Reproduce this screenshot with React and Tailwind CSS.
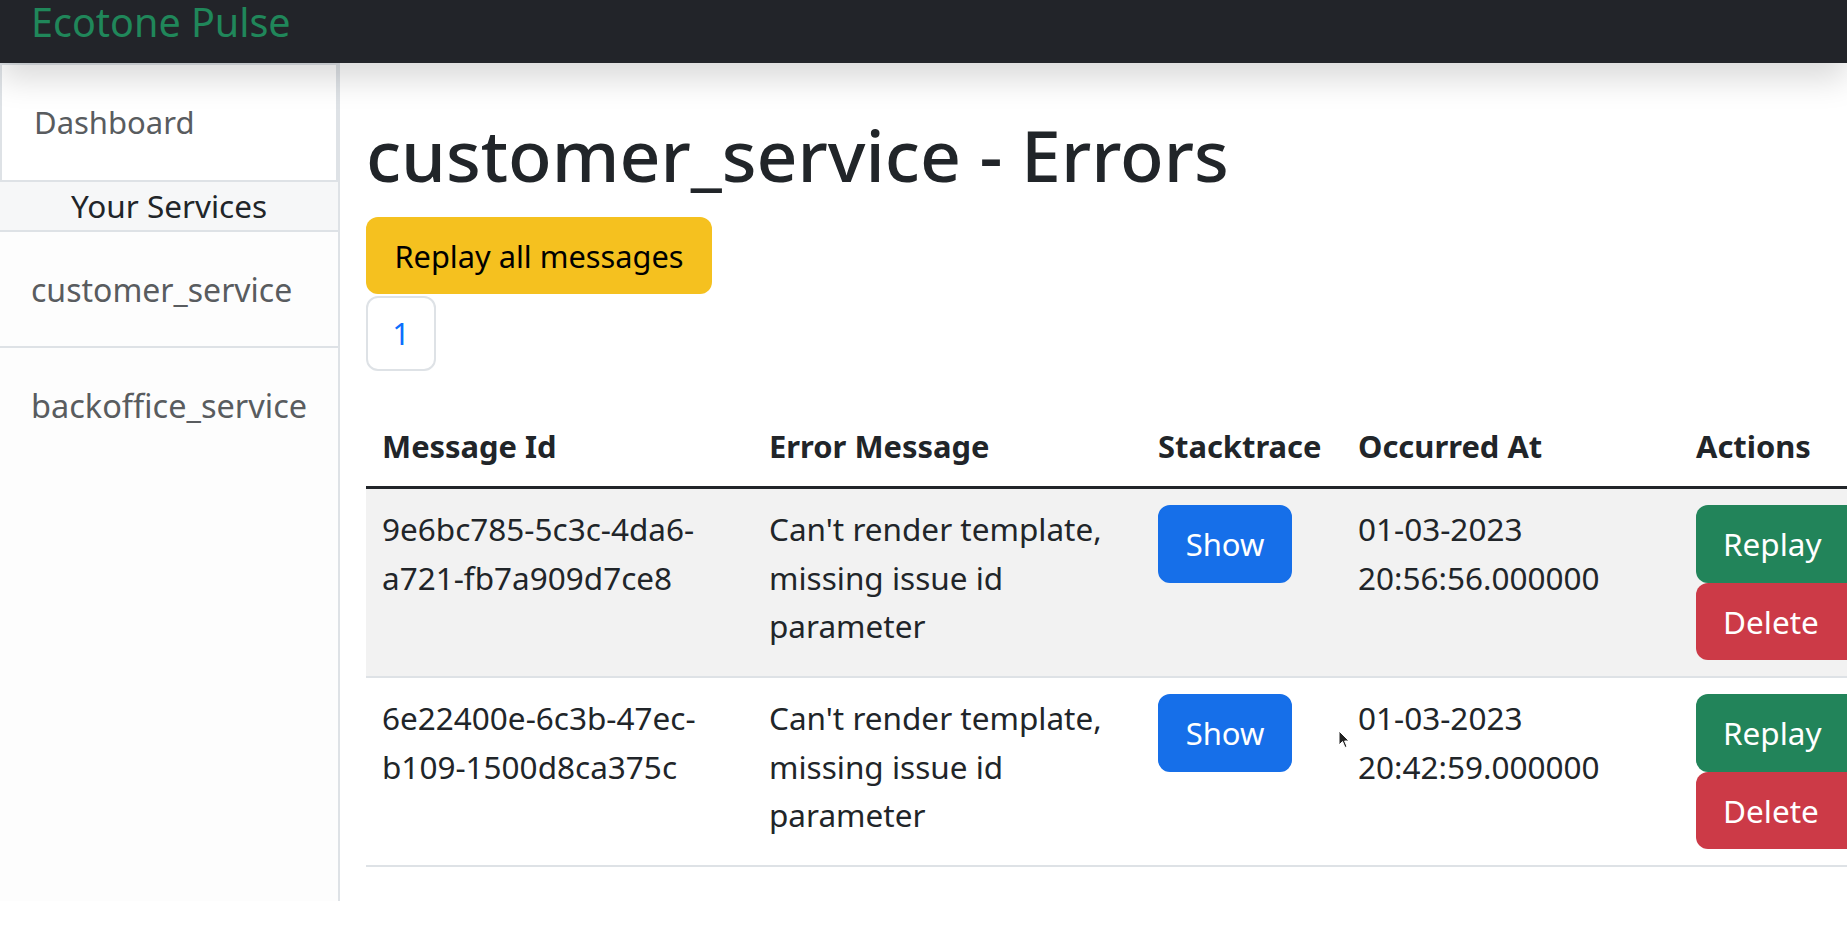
import React from "react";

const FONT = { fontFamily: '"Noto Sans", "Open Sans", sans-serif' };

const rows = [
  {
    id: ["9e6bc785-5c3c-4da6-", "a721-fb7a909d7ce8"],
    date: "01-03-2023",
    time: "20:56:56.000000",
    striped: true,
  },
  {
    id: ["6e22400e-6c3b-47ec-", "b109-1500d8ca375c"],
    date: "01-03-2023",
    time: "20:42:59.000000",
    striped: false,
  },
];

function Row({ r }) {
  const bg = r.striped ? "bg-[#f2f2f2]" : "bg-white";
  const td = `align-top p-[16px] border-b-2 border-[#dee2e6] ${bg}`;
  return (
    <tr>
      <td className={td}>
        <span className="block">{r.id[0]}</span>
        <span className="block">{r.id[1]}</span>
      </td>
      <td className={td}>Can't render template, missing issue id parameter</td>
      <td className={td}>
        <button className="w-[134px] h-[78px] rounded-[12px] bg-[#166fe9] border-2 border-[#166fe9] text-white text-[31px] leading-[48px]">
          Show
        </button>
      </td>
      <td className={td}>
        <span className="block">{r.date}</span>
        <span className="block">{r.time}</span>
      </td>
      <td className={td}>
        <div className="flex flex-col items-start">
          <button className="h-[78px] pl-[27px] pr-[40px] rounded-[12px] bg-[#22845a] text-white text-[31.5px] leading-[48px] whitespace-nowrap">
            Replay
          </button>
          <button className="h-[77px] pl-[27px] pr-[40px] rounded-[12px] bg-[#cc3a47] text-white text-[31.5px] leading-[48px] whitespace-nowrap">
            Delete
          </button>
        </div>
      </td>
    </tr>
  );
}

export default function App() {
  const th = "text-left font-bold p-[16px] border-b-[3px] border-[#212529] text-[30.9px] leading-[48px]";
  return (
    <div className="relative w-[1847px] h-[926px] overflow-hidden bg-white text-[#212529]" style={FONT}>
      <nav className="relative z-10 h-[63px] bg-[#222429] shadow-[0_16px_32px_rgba(0,0,0,0.15)] pl-[31px]">
        <span className="block text-[39.5px] leading-[44px] text-[#20875a]">Ecotone Pulse</span>
      </nav>

      <div className="flex">
        <aside className="w-[340px] h-[838px] shrink-0 border-r-2 border-[#dee2e6] bg-[#fdfdfd]">
          <div className="h-[119px] border-2 border-[#dee2e6] bg-white pl-[32px] pt-[33px] text-[31px] leading-[48px] text-[#595c5f]">
            Dashboard
          </div>
          <div className="h-[50px] border-b-2 border-[#dee2e6] bg-[#f6f7f8] text-center text-[31.5px] leading-[48px] text-[#212529]">
            Your Services
          </div>
          <div className="h-[116px] border-b-2 border-[#dee2e6] pl-[31px] pt-[34px] text-[32px] leading-[48px] text-[#595c5f]">
            customer_service
          </div>
          <div className="h-[116px] pl-[31px] pt-[34px] text-[32.5px] leading-[48px] text-[#595c5f]">
            backoffice_service
          </div>
        </aside>

        <main className="flex-1 min-w-0 pl-[26px] pt-[44px]">
          <h1 className="h-[96px] text-[71.5px] leading-[96px] font-medium mb-[14px] whitespace-nowrap">
            customer_service - Errors
          </h1>
          <button className="w-[346px] h-[77px] rounded-[12px] bg-[#f5c11f] text-black text-[30.75px] leading-[48px]">
            Replay all messages
          </button>
          <div className="mt-[2px] w-[70px] h-[75px] rounded-[12px] border-2 border-[#dee2e6] flex items-center justify-center text-[#0d6efd] text-[31px]">
            1
          </div>

          <table className="mt-[35px] w-[1500px] table-fixed border-collapse text-[31.5px] leading-[48.5px]">
            <colgroup>
              <col className="w-[387px]" />
              <col className="w-[389px]" />
              <col className="w-[200px]" />
              <col className="w-[338px]" />
              <col className="w-[186px]" />
            </colgroup>
            <thead>
              <tr>
                <th className={th}>Message Id</th>
                <th className={th}>Error Message</th>
                <th className={th}>Stacktrace</th>
                <th className={th}>Occurred At</th>
                <th className={th}>Actions</th>
              </tr>
            </thead>
            <tbody>
              {rows.map((r, i) => (
                <Row key={i} r={r} />
              ))}
            </tbody>
          </table>
        </main>
      </div>

      <svg className="absolute left-[1338px] top-[730px]" width="12" height="19" viewBox="0 0 12 19">
        <path d="M1 1 L1 15 L4.5 11.5 L7 17.5 L9 16.6 L6.6 11 L11 11 Z" fill="#222" stroke="#fff" strokeWidth="1" />
      </svg>
    </div>
  );
}
